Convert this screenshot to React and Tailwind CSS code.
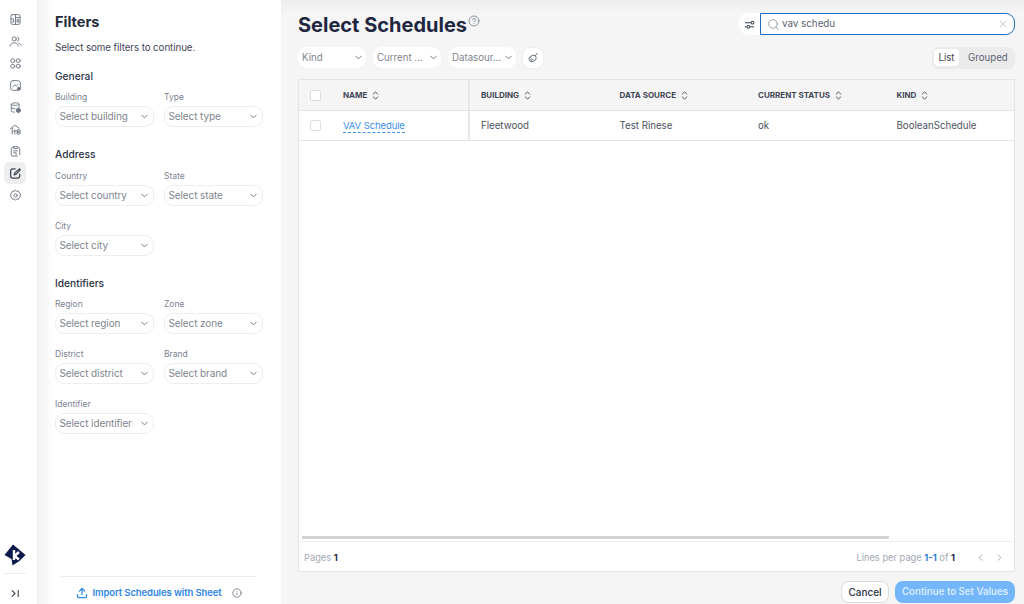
import React from 'react';
import { ChevronDown, ChevronLeft, ChevronRight, ChevronsUpDown, CircleHelp, Info, Search, Upload, X } from 'lucide-react';

const font = { fontFamily: 'Inter, "Noto Sans", sans-serif' };

// sidebar icons, drawn by hand since the packages have nothing close
const railIcons = [
  <g key="a"><rect x="3" y="2.500" width="14" height="15" rx="2" /><path d="M10 2.500v15M3 9h4v5H5M10 7h7M13 10h2v4h-2z" /></g>,
  <g key="b"><circle cx="8" cy="6" r="3.200" /><path d="M13 3.500a2.800 2.800 0 0 1 0 5.500M1.500 17c.8-3.500 3.500-5 6.500-5s5.700 1.500 6.500 5M15 12c1.500.5 2.800 2 3.500 4" /></g>,
  <g key="c"><circle cx="5.800" cy="5.800" r="3" /><circle cx="14.200" cy="5.800" r="3" /><circle cx="5.800" cy="14.200" r="3" /><circle cx="14.200" cy="14.200" r="3" /></g>,
  <g key="d"><rect x="2.500" y="2.500" width="15" height="15" rx="4" /><path d="M6 12l3-3 2 2 3-3" /><circle cx="15" cy="15" r="2.200" fill="#6b7280" /></g>,
  <g key="e"><path d="M3.500 5c0-3 12-3 12 0v5M3.500 5v10c0 1.500 2 2 5 2.200M3.500 5c0 2.500 12 2.500 12 0M3.500 10c1 1.500 4 2 6 2" /><circle cx="14.500" cy="14.500" r="3.200" fill="#6b7280" /></g>,
  <g key="f"><path d="M2 9l7-5.500L15.500 8M5 8v9M9 11v6M7 13l2-2 2 2" /><rect x="12" y="10.500" width="5.500" height="3" rx="1.500" /><rect x="12" y="14" width="5.500" height="3" rx="1.500" /></g>,
  <g key="g"><path d="M6 4H5a1.500 1.500 0 0 0-1.500 1.500v10A1.500 1.500 0 0 0 5 17h8M14 4h1a1.500 1.500 0 0 1 1.500 1.500V15" /><rect x="6.500" y="2.500" width="7" height="3" rx="1" /><path d="M7 9h6M7 12h4v3" /></g>,
  <g key="h" strokeWidth="1.900"><path d="M16.500 11v3a3 3 0 0 1-3 3h-8a3 3 0 0 1-3-3V6a3 3 0 0 1 3-3h4" /><path d="M8 12l1-3 7-6 1.500 1.500-6.500 6.500z" /></g>,
  <g key="i"><circle cx="10" cy="10" r="2.500" /><path d="M10 2l2 1.500 2.500-.3 1 2.300 2.200 1.500-.7 2.500.7 2.500-2.200 1.500-1 2.300-2.500-.3-2 1.500-2-1.500-2.500.3-1-2.300-2.200-1.500.7-2.500-.7-2.500 2.200-1.500 1-2.300 2.500.3z" /></g>,
];

function Rail() {
  return (
    <aside className="w-[38px] shrink-0 bg-white flex flex-col items-start pl-[4px] border-r border-[#f0f0f0]">
      <div className="mt-[8px] flex flex-col items-center">
        {railIcons.map((icon, i) => (
          <div key={i} className={`w-[22px] h-[22px] flex items-center justify-center rounded-[5px] ${i === 7 ? 'bg-[#eeeeee]' : ''}`}>
            <svg width="13" height="13" viewBox="0 0 20 20" fill="none" stroke={i === 7 ? '#3f4656' : '#6b7280'} strokeWidth="1.400" strokeLinecap="round" strokeLinejoin="round">{icon}</svg>
          </div>
        ))}
      </div>
      <div className="mt-auto w-[22px] flex flex-col items-center">
        <svg width="22" height="22" viewBox="0 0 22 22" className="mb-[7px]">
          <path d="M9 0.500l12.500 10.500-6 6-7 4.500-1-6.500-7-4z" fill="#0c1a4b" />
          <path d="M10 6v10M15 8l-4.500 4 4.500 3.500" fill="none" stroke="#fff" strokeWidth="2.400" />
        </svg>
        <div className="w-full border-t border-[#eeeeee]" />
        <div className="h-[30px] w-full flex items-end pb-[6px] justify-center text-[#374151]">
          <svg width="9" height="9" viewBox="0 0 10 10" fill="none" stroke="currentColor" strokeWidth="1.200"><path d="M1 1.500L4.500 5 1 8.500M8 1v8" /></svg>
        </div>
      </div>
    </aside>
  );
}

function Select({ label, placeholder }) {
  return (
    <div className="w-[99px]">
      <div className="text-[8.500px] leading-[10px] text-[#7b8291] mb-[4px]">{label}</div>
      <div className="h-[21px] rounded-[9px] border border-[#eeeeee] bg-white flex items-center justify-between pl-[3.500px] pr-[3px] text-[10px] tracking-[-0.1px] text-[#80858f]">
        <span className="truncate">{placeholder}</span>
        <ChevronDown size={11} className="text-[#6b7280] shrink-0" />
      </div>
    </div>
  );
}

function Section({ title, children, mt }) {
  return (
    <div className={mt}>
      <div className="text-[10.200px] leading-[12px] font-medium text-[#2b3245] mb-[10.500px]">{title}</div>
      <div className="grid grid-cols-[99px_99px] gap-x-[10px] gap-y-[15px]">{children}</div>
    </div>
  );
}

function Filters() {
  return (
    <aside className="w-[243px] shrink-0 bg-white bg-[linear-gradient(90deg,#f3f3f3_0px,#ffffff_16px)] pl-[17px] pr-[18px] flex flex-col">
      <h2 className="mt-[13px] text-[14.500px] leading-[17px] font-bold text-[#252b3b]">Filters</h2>
      <p className="mt-[12px] text-[9.800px] leading-[12px] tracking-[-0.1px] text-[#3f4656]">Select some filters to continue.</p>
      <Section title="General" mt="mt-[15.500px]">
        <Select label="Building" placeholder="Select building" />
        <Select label="Type" placeholder="Select type" />
      </Section>
      <Section title="Address" mt="mt-[21px]">
        <Select label="Country" placeholder="Select country" />
        <Select label="State" placeholder="Select state" />
        <Select label="City" placeholder="Select city" />
      </Section>
      <Section title="Identifiers" mt="mt-[21px]">
        <Select label="Region" placeholder="Select region" />
        <Select label="Zone" placeholder="Select zone" />
        <Select label="District" placeholder="Select district" />
        <Select label="Brand" placeholder="Select brand" />
        <Select label="Identifier" placeholder="Select identifier" />
      </Section>
      <div className="mt-auto mx-[6px] border-t border-[#eeeeee] h-[28px] pt-[5px] flex items-center justify-center gap-[4px] text-[9.500px] font-semibold tracking-[-0.1px] text-[#2f86e6]">
        <Upload size={12} strokeWidth={2.500} />
        <span>Import Schedules with Sheet</span>
        <Info size={10} className="ml-[6px] text-[#6b7280]" />
      </div>
    </aside>
  );
}

function Chip({ label }) {
  return (
    <div className="w-[68px] h-[21px] rounded-[9px] bg-white flex items-center justify-between pl-[4px] pr-[2px] text-[9.700px] text-[#80858f]">
      <span className="pt-[1px]">{label}</span>
      <ChevronDown size={11} className="text-[#6b7280]" />
    </div>
  );
}

const cols = [
  { title: 'BUILDING', value: 'Fleetwood' },
  { title: 'DATA SOURCE', value: 'Test Rinese' },
  { title: 'CURRENT STATUS', value: 'ok' },
  { title: 'KIND', value: 'BooleanSchedule' },
];

function Box() {
  return <div className="w-[11px] h-[11px] rounded-[2px] border border-[#dddddd] bg-white" />;
}

function Table() {
  return (
    <div className="mt-[10px] mr-[9px] ml-[17px] h-[493px] border border-[#e4e4e4] bg-white flex flex-col text-[#4b5262]">
      <div className="h-[31px] shrink-0 bg-[#f5f5f5] border-b border-[#e4e4e4] flex items-center text-[8px] font-bold text-[#3f4656]">
        <div className="w-[171px] h-full shrink-0 border-r-2 border-[#e8e8e8] flex items-center pl-[11px]">
          <Box />
          <span className="ml-[22px]">NAME</span>
          <ChevronsUpDown size={11} strokeWidth={2} className="ml-[3px]" />
        </div>
        {cols.map((c) => (
          <div key={c.title} className="w-[138.500px] shrink-0 flex items-center pl-[11px]">
            <span>{c.title}</span>
            <ChevronsUpDown size={11} strokeWidth={2} className="ml-[3px]" />
          </div>
        ))}
      </div>
      <div className="h-[30px] shrink-0 border-b border-[#e4e4e4] flex items-center text-[9.700px]">
        <div className="w-[171px] h-full shrink-0 border-r-2 border-[#e8e8e8] flex items-center pl-[11px]">
          <Box />
          <span className="ml-[22px] mt-[2px] text-[#3d8fe8] text-[9.500px] tracking-[-0.1px] border-b border-dashed border-[#3d8fe8] leading-[12px]">VAV Schedule</span>
        </div>
        {cols.map((c) => (
          <div key={c.title} className="w-[138.500px] shrink-0 pl-[11px] pt-[2px]">{c.value}</div>
        ))}
      </div>
      <div className="flex-1 flex items-end pl-[3px] pb-[2px]">
        <div className="w-[587px] h-[3px] bg-[#d2d3d7]" />
      </div>
      <div className="h-[30px] shrink-0 border-t border-[#eeeeee] pt-[2px] flex items-center justify-between pl-[5px] pr-[9px] text-[9.300px] text-[#a3a8b3]">
        <div>Pages <span className="font-bold text-[#1f2a44]">1</span></div>
        <div className="flex items-center">
          <span>Lines per page <span className="font-bold text-[#2f7fd9]">1-1</span> of <span className="font-bold text-[#1f2a44]">1</span></span>
          <ChevronLeft size={11} className="ml-[20px] text-[#9ca3af]" />
          <ChevronRight size={11} className="ml-[8px] text-[#9ca3af]" />
        </div>
      </div>
    </div>
  );
}

export default function App() {
  return (
    <div style={font} className="w-[1024px] h-[604px] overflow-hidden flex bg-[#f5f5f5]">
      <Rail />
      <Filters />
      <main className="flex-1 min-w-0 flex flex-col bg-[linear-gradient(180deg,#ececec_0px,#f5f5f5_12px)]">
        <div className="h-[46px] shrink-0 flex items-start justify-between pl-[17px] pr-[9px]">
          <div className="flex items-start mt-[12px]">
            <h1 className="text-[20px] leading-[26px] font-bold text-[#1f2740]">Select Schedules</h1>
            <CircleHelp size={12} strokeWidth={1.500} className="ml-[1px] mt-[3px] text-[#6b7280]" />
          </div>
          <div className="flex items-center mt-[13px]">
            <div className="w-[21px] h-[22px] bg-white rounded-l-[9px] flex items-center justify-center">
              <svg width="11" height="11" viewBox="0 0 12 12" fill="none" stroke="#374151" strokeWidth="1.100"><path d="M1 4h6.500M1 8.500h2" /><circle cx="9.300" cy="4" r="1.500" /><circle cx="4.800" cy="8.500" r="1.500" /><path d="M6.500 8.500H11" /></svg>
            </div>
            <div className="w-[255px] h-[22px] bg-white border border-[#1f6fc0] rounded-r-[9px] flex items-center pl-[6px] pr-[5px] text-[9.800px] text-[#5b6272]">
              <Search size={13} strokeWidth={1.200} className="text-[#6b7280]" />
              <span className="ml-[2px]">vav schedu</span>
              <X size={12} strokeWidth={1.200} className="ml-auto mr-[0px] text-[#9ca3af]" />
            </div>
          </div>
        </div>
        <div className="h-[23px] shrink-0 flex items-center justify-between pl-[17px] pr-[9px]">
          <div className="flex items-center gap-[7px]">
            <Chip label="Kind" />
            <Chip label="Current ..." />
            <Chip label="Datasour..." />
            <div className="w-[22px] h-[22px] -ml-[1px] rounded-[8px] bg-white border border-[#eeeeee] flex items-center justify-center">
              <svg width="11" height="11" viewBox="0 0 12 12" fill="none" stroke="#6b7280" strokeWidth="1"><ellipse cx="5" cy="7" rx="4" ry="3" transform="rotate(-30 5 7)" /><path d="M7.500 4.500L10.500 1M3 6l3 3M2.500 8l2 1.500" /></svg>
            </div>
          </div>
          <div className="w-[83px] h-[22px] rounded-[7px] bg-[#ebebeb] flex items-center pl-[2px] text-[9.700px] text-[#5b6272]">
            <div className="w-[25px] h-[17px] rounded-[4px] bg-white flex items-center justify-center text-[#3f4656]"><span className="pt-[1px]">List</span></div>
            <div className="ml-[9px] pt-[1px]">Grouped</div>
          </div>
        </div>
        <Table />
        <div className="mt-[9px] flex justify-end gap-[6px] pr-[9px]">
          <div className="w-[48px] h-[22px] rounded-[8px] bg-white border border-[#dddddd] flex items-center justify-center text-[10px] font-medium text-[#2b3245]">Cancel</div>
          <div className="w-[120px] h-[22px] rounded-[8px] bg-[#73b6fb] flex items-center justify-center text-[9.700px] font-semibold text-[#d8ebff]"><span className="pt-[1px]">Continue to Set Values</span></div>
        </div>
      </main>
    </div>
  );
}
